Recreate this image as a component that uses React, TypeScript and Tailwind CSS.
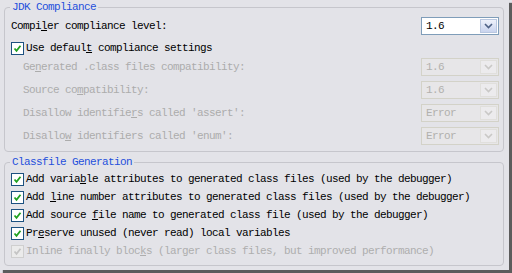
import React from 'react';

const font = { fontFamily: '"Liberation Mono", "DejaVu Sans Mono", monospace' };

const Label: React.FC<{ text: string; u: number }> = ({ text, u }) => (
  <span className="whitespace-pre">
    {text.slice(0, u)}
    <span className="underline underline-offset-[1px]">{text[u]}</span>
    {text.slice(u + 1)}
  </span>
);

const Chevron: React.FC<{ color: string }> = ({ color }) => (
  <svg width="9" height="6" viewBox="0 0 9 6">
    <path d="M1 1 L4.5 4.5 L8 1" fill="none" stroke={color} strokeWidth="1.6" />
  </svg>
);

const Combo: React.FC<{ value: string; disabled?: boolean }> = ({ value, disabled }) =>
  disabled ? (
    <div className="flex w-[78px] h-[18px] border border-[#d3d2c8] bg-[#e7e6e8] shrink-0">
      <div className="flex-1 flex items-center pl-[4px] text-[#b1b0ad]">{value}</div>
      <div className="w-[17px] m-[1px] flex items-center justify-center border border-[#e0dfdc] bg-[#ecebed]">
        <Chevron color="#c9c8c6" />
      </div>
    </div>
  ) : (
    <div className="flex w-[78px] h-[18px] border border-[#7f9db9] bg-white shrink-0">
      <div className="flex-1 flex items-center pl-[4px] text-black">{value}</div>
      <div className="w-[17px] m-[1px] flex items-center justify-center border border-[#b9c7e0] bg-gradient-to-b from-[#eef2fb] to-[#c9d4ee]">
        <Chevron color="#4d6185" />
      </div>
    </div>
  );

const Check: React.FC<{ disabled?: boolean }> = ({ disabled }) => (
  <div
    className={`w-[13px] h-[13px] border flex items-center justify-center shrink-0 ${
      disabled ? 'border-[#cfcfcf] bg-[#ebebeb]' : 'border-[#1c5180] bg-white'
    }`}
  >
    <svg width="9" height="9" viewBox="0 0 9 9">
      <path
        d="M1.5 4.5 L3.5 6.8 L7.5 1.8"
        fill="none"
        stroke={disabled ? '#c4c4c4' : '#21a121'}
        strokeWidth="1.8"
      />
    </svg>
  </div>
);

const CheckRow: React.FC<{ text: string; u: number; disabled?: boolean }> = ({ text, u, disabled }) => (
  <div className={`h-[18px] flex items-center gap-[2px] ${disabled ? 'text-[#aeaeae]' : 'text-black'}`}>
    <Check disabled={disabled} />
    <Label text={text} u={u} />
  </div>
);

const DisabledRow: React.FC<{ text: string; u: number; value: string }> = ({ text, u, value }) => (
  <div className="h-[18px] flex items-center justify-between pl-[12px] text-[#acacac]">
    <Label text={text} u={u} />
    <Combo value={value} disabled />
  </div>
);

const Group: React.FC<{ title: string; className?: string; children: React.ReactNode }> = ({
  title,
  className,
  children,
}) => (
  <fieldset className={`border border-[#c6c6cc] rounded-[4px] w-[500px] ml-[4px] ${className ?? ''}`}>
    <legend className="ml-[5px] px-[2px] leading-[14px] text-[#2350dc]">{title}</legend>
    {children}
  </fieldset>
);

export default function App() {
  return (
    <div
      className="w-[512px] h-[273px] bg-[#e3e3e8] text-[11px] tracking-[-0.6px] leading-[14px] overflow-hidden"
      style={font}
    >
      <div className="w-[509px] h-[270px] bg-[#e3e3e8] shadow-[3px_3px_1px_#5c5c5c] flex flex-col">
        <Group title="JDK Compliance" className="pb-[6px]">
          <div className="pl-[6px] pr-[4px] pt-[3px] flex flex-col">
            <div className="h-[18px] flex items-center justify-between">
              <Label text="Compiler compliance level:" u={5} />
              <Combo value="1.6" />
            </div>
            <div className="mt-[4px]">
              <CheckRow text="Use default compliance settings" u={10} />
            </div>
            <div className="mt-[1px] flex flex-col gap-[5px]">
              <DisabledRow text="Generated .class files compatibility:" u={2} value="1.6" />
              <DisabledRow text="Source compatibility:" u={9} value="1.6" />
              <DisabledRow text="Disallow identifiers called 'assert':" u={18} value="Error" />
              <DisabledRow text="Disallow identifiers called 'enum':" u={7} value="Error" />
            </div>
          </div>
        </Group>
        <Group title="Classfile Generation" className="mt-[3px] pb-[5px]">
          <div className="pl-[6px] pr-[4px] pt-[1px] flex flex-col">
            <CheckRow text="Add variable attributes to generated class files (used by the debugger)" u={9} />
            <CheckRow text="Add line number attributes to generated class files (used by the debugger)" u={4} />
            <CheckRow text="Add source file name to generated class file (used by the debugger)" u={11} />
            <CheckRow text="Preserve unused (never read) local variables" u={2} />
            <CheckRow text="Inline finally blocks (larger class files, but improved performance)" u={19} disabled />
          </div>
        </Group>
      </div>
    </div>
  );
}
